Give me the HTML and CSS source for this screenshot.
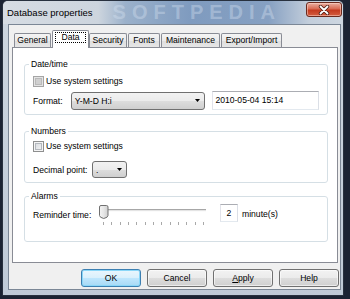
FILE: index.html
```html
<!DOCTYPE html>
<html lang="en">
<head>
    <meta charset="UTF-8">
    <title>Database properties</title>
    <link rel="stylesheet" href="styles.css">
</head>
<body>

    <div class="window">
        <div class="titlebar">
            <span class="title">Database properties</span>
            <span class="watermark">SOFTPEDIA</span>
            <button class="close">
                <svg width="12" height="10" viewBox="0 0 12 10">
                    <path d="M2.5 1.5 L9.5 8.5 M9.5 1.5 L2.5 8.5" stroke="#4a1d15" stroke-width="3.4" stroke-linecap="round"/>
                    <path d="M2.5 1.5 L9.5 8.5 M9.5 1.5 L2.5 8.5" stroke="#fff" stroke-width="1.8" stroke-linecap="round"/>
                </svg>
            </button>
        </div>

        <div class="client">
            <div class="tabs">
                <div class="tab tab-general">General</div>
                <div class="tab tab-active tab-data"><span class="focus">Data</span></div>
                <div class="tab tab-security">Security</div>
                <div class="tab tab-fonts">Fonts</div>
                <div class="tab tab-maint">Maintenance</div>
                <div class="tab tab-export">Export/Import</div>
            </div>

            <div class="panel">
                <fieldset class="group group-date">
                    <legend>Date/time</legend>
                    <div class="row-check">
                        <span class="check check-dim"></span>
                        <span>Use system settings</span>
                    </div>
                    <div class="row-format">
                        <span class="label label-format">Format:</span>
                        <div class="combo combo-format">
                            <span>Y-M-D H:i</span>
                            <svg class="arrow" width="5" height="3" viewBox="0 0 5 3"><path d="M0 0 H5 L2.5 3 Z" fill="#000"/></svg>
                        </div>
                        <div class="edit edit-date">2010-05-04 15:14</div>
                    </div>
                </fieldset>

                <fieldset class="group group-numbers">
                    <legend>Numbers</legend>
                    <div class="row-check">
                        <span class="check"></span>
                        <span>Use system settings</span>
                    </div>
                    <div class="row-decimal">
                        <span class="label label-decimal">Decimal point:</span>
                        <div class="combo combo-decimal">
                            <span>.</span>
                            <svg class="arrow" width="5" height="3" viewBox="0 0 5 3"><path d="M0 0 H5 L2.5 3 Z" fill="#000"/></svg>
                        </div>
                    </div>
                </fieldset>

                <fieldset class="group group-alarms">
                    <legend>Alarms</legend>
                    <div class="row-alarm">
                        <span class="label label-reminder">Reminder time:</span>
                        <svg class="slider" width="110" height="22" viewBox="0 0 110 22">
                            <line x1="1" y1="5.5" x2="108" y2="5.5" stroke="#a7a7a7"/>
                            <line x1="1" y1="6.5" x2="108" y2="6.5" stroke="#e4e4e4"/>
                            <line x1="1" y1="7.5" x2="108" y2="7.5" stroke="#fbfbfb"/>
                            <g stroke="#a9a9a9">
                                <line x1="5.5" y1="18" x2="5.5" y2="21"/>
                                <line x1="13.5" y1="18" x2="13.5" y2="21"/>
                                <line x1="22.5" y1="18" x2="22.5" y2="21"/>
                                <line x1="30.5" y1="18" x2="30.5" y2="21"/>
                                <line x1="38.5" y1="18" x2="38.5" y2="21"/>
                                <line x1="47.5" y1="18" x2="47.5" y2="21"/>
                                <line x1="55.5" y1="18" x2="55.5" y2="21"/>
                                <line x1="63.5" y1="18" x2="63.5" y2="21"/>
                                <line x1="72.5" y1="18" x2="72.5" y2="21"/>
                                <line x1="80.5" y1="18" x2="80.5" y2="21"/>
                                <line x1="88.5" y1="18" x2="88.5" y2="21"/>
                                <line x1="97.5" y1="18" x2="97.5" y2="21"/>
                                <line x1="105.5" y1="18" x2="105.5" y2="21"/>
                            </g>
                            <defs>
                                <linearGradient id="thumb" x1="0" y1="0" x2="1" y2="0">
                                    <stop offset="0" stop-color="#f4f4f4"/>
                                    <stop offset="0.5" stop-color="#e6e6e6"/>
                                    <stop offset="1" stop-color="#cfcfcf"/>
                                </linearGradient>
                            </defs>
                            <path d="M1.5 3 Q1.5 1.5 3 1.5 H8.5 Q10 1.5 10 3 V11.5 Q10 13.5 5.75 14.5 Q1.5 13.5 1.5 11.5 Z" fill="url(#thumb)" stroke="#707070"/>
                        </svg>
                        <div class="edit spin">2</div>
                        <span class="unit">minute(s)</span>
                    </div>
                </fieldset>
            </div>

            <div class="buttons">
                <button class="btn btn-default">OK</button>
                <button class="btn">Cancel</button>
                <button class="btn"><u>A</u>pply</button>
                <button class="btn">Help</button>
            </div>
        </div>
    </div>

</body>
</html>
```

FILE: styles.css
```css
* {
    box-sizing: border-box;
}
body {
    margin: 0;
    width: 350px;
    height: 299px;
    overflow: hidden;
    background-color: #1b2333;
    font-family: "Liberation Sans", Arial, sans-serif;
    font-size: 8.6px;
    color: #000;
}
.window {
    margin-left: 2px;
    width: 342px;
    height: 296px;
    border: 1px solid #28313f;
    border-radius: 6px 6px 0 0;
    background: linear-gradient(#cdd6e0, #bfcad7);
    display: flex;
    flex-direction: column;
    overflow: hidden;
}
.titlebar {
    height: 23px;
    flex: none;
    display: flex;
    align-items: flex-start;
    padding: 0 1px 0 4px;
    background: linear-gradient(90deg, #d6dce3 0%, #cdd5de 28%, #9bb1cb 36%, #7f9bbf 55%, #86a0c2 78%, #c3cedb 90%, #cdd6e0 100%);
}
.title {
    font-size: 9.5px;
    line-height: 23px;
    white-space: nowrap;
}
.watermark {
    margin-left: 20px;
    font-size: 20px;
    font-weight: bold;
    line-height: 23px;
    letter-spacing: 6px;
    color: rgba(214, 226, 241, 0.4);
    white-space: nowrap;
}
.close {
    margin-left: auto;
    margin-top: 1px;
    width: 36px;
    height: 15px;
    padding: 0;
    border: 1px solid #6b2a1e;
    border-radius: 3px;
    background: linear-gradient(#eab0a2, #d96a53 45%, #c53a1f 55%, #d35e40);
    box-shadow: inset 0 0 0 1px rgba(255, 220, 210, 0.5);
    display: flex;
    align-items: center;
    justify-content: center;
}
.client {
    margin: 0 2px 0 5px;
    height: 266px;
    flex: none;
    background-color: #f0f0f0;
    border: 1px solid #7b8796;
    display: flex;
    flex-direction: column;
}
.tabs {
    height: 22px;
    flex: none;
    display: flex;
    align-items: flex-end;
    padding-left: 5px;
}
.tab {
    height: 14px;
    margin-right: 1px;
    padding-bottom: 2px;
    border: 1px solid #898c95;
    border-bottom: none;
    border-radius: 2px 2px 0 0;
    background: linear-gradient(#f4f4f4, #ebebeb 50%, #dedede 51%, #e6e6e6);
    display: flex;
    align-items: center;
    justify-content: center;
    white-space: nowrap;
}
.tab-general { width: 37px; }
.tab-data { width: 37px; }
.tab-security { width: 38px; }
.tab-fonts { width: 32px; }
.tab-maint { width: 59px; }
.tab-export { width: 61px; }
.tab-active {
    height: 18px;
    margin-right: 0;
    margin-bottom: -1px;
    padding-bottom: 0;
    background: #fff;
    align-items: flex-start;
    position: relative;
    z-index: 1;
}
.focus {
    display: block;
    width: 31px;
    height: 11px;
    margin-top: 1px;
    border: 1px dotted #000;
    line-height: 9px;
    text-align: center;
}
.panel {
    margin: 0 2px 0 3px;
    height: 216px;
    flex: none;
    border: 1px solid #898c95;
    background: #fff;
    padding: 11px 9px 0 11px;
}
.group {
    margin: 0;
    min-width: 0;
    border: 1px solid #d5dfe5;
    border-radius: 3px;
    padding: 0 8px;
}
.group legend {
    padding: 0 2px;
    margin-left: -4px;
    line-height: 11px;
}
.group-date {
    padding-top: 5px;
    padding-bottom: 4px;
}
.group-numbers {
    margin-top: 11px;
    padding-top: 3px;
    padding-bottom: 4px;
}
.group-alarms {
    margin-top: 8px;
    padding-top: 2px;
    padding-bottom: 15px;
}
.row-check {
    height: 12px;
    display: flex;
    align-items: center;
    gap: 2px;
}
.check {
    width: 11px;
    height: 11px;
    border: 1px solid #8e8f8f;
    background: linear-gradient(135deg, #d3d7dc, #f7f7f7);
    box-shadow: inset 0 0 0 1px #f4f4f4, inset 0 0 0 2px #b3b8be;
}
.check-dim {
    border-color: #a5a5a5;
    background: #d0d0d0;
    box-shadow: inset 0 0 0 1px #e4e4e4, inset 0 0 0 2px #bababa;
}
.row-format {
    margin-top: 4px;
    height: 19px;
    display: flex;
    align-items: center;
}
.row-decimal {
    margin-top: 9px;
    height: 17px;
    display: flex;
    align-items: center;
}
.row-alarm {
    height: 22px;
    display: flex;
    align-items: flex-start;
}
.label {
    white-space: nowrap;
}
.label-format { width: 38px; }
.label-decimal { width: 59px; }
.label-reminder {
    width: 65px;
    line-height: 22px;
}
.combo {
    display: flex;
    align-items: center;
    justify-content: space-between;
    padding: 0 4px 0 3px;
    border: 1px solid #707070;
    border-radius: 3px;
    background: linear-gradient(#f2f2f2, #ebebeb 50%, #dddddd 51%, #cfcfcf);
}
.combo-format {
    width: 135px;
    height: 18px;
}
.combo-decimal {
    width: 35px;
    height: 17px;
}
.edit {
    height: 19px;
    border: 1px solid;
    border-color: #abadb3 #dbdfe6 #e3e9ef #e2e3ea;
    background: #fff;
    padding: 0 2px;
    line-height: 17px;
    white-space: nowrap;
}
.edit-date {
    width: 107px;
    margin-left: 7px;
}
.slider {
    display: block;
    flex: none;
}
.spin {
    width: 18px;
    height: 18px;
    margin-left: 12px;
    padding: 0;
    text-align: center;
    line-height: 16px;
}
.unit {
    margin-left: 4px;
    line-height: 20px;
}
.buttons {
    margin-top: 6px;
    display: flex;
    justify-content: flex-end;
    gap: 6px;
    padding-right: 1px;
}
.btn {
    width: 60px;
    height: 18px;
    padding: 0;
    font: inherit;
    color: #000;
    border: 1px solid #707070;
    border-radius: 3px;
    background: linear-gradient(#f2f2f2, #ebebeb 50%, #dddddd 51%, #cfcfcf);
    box-shadow: inset 0 0 0 1px rgba(255, 255, 255, 0.6);
}
.btn-default {
    border-color: #3c7fb1;
    background: linear-gradient(#eaf6fd, #d9f0fc 50%, #bee6fd 51%, #a7d9f5);
    box-shadow: inset 0 0 0 1px #8ad7f8;
}
```
